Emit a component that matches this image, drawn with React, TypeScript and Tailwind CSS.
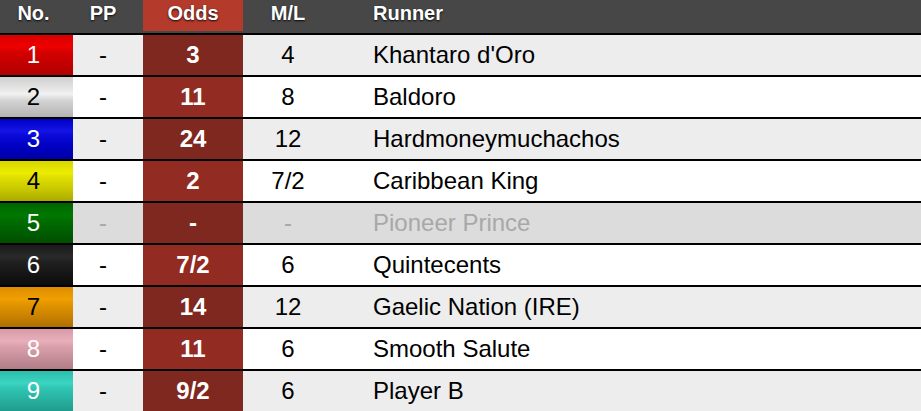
import React from 'react';

type Runner = {
  no: number;
  odds: string;
  ml: string;
  name: string;
  cloth: string;
  numText: string;
  scratched?: boolean;
};

const runners: Runner[] = [
  {
    no: 1, odds: '3', ml: '4', name: "Khantaro d'Oro",
    cloth: 'bg-[linear-gradient(to_bottom,#d80000_0%,#ee0000_30%,#d60000_42%,#c40000_70%,#b00000_100%)]',
    numText: 'text-white',
  },
  {
    no: 2, odds: '11', ml: '8', name: 'Baldoro',
    cloth: 'bg-[linear-gradient(to_bottom,#cfcfcf_0%,#e6e6e6_30%,#f2f2f2_42%,#d2d2d2_60%,#b4b4b4_100%)]',
    numText: 'text-black',
  },
  {
    no: 3, odds: '24', ml: '12', name: 'Hardmoneymuchachos',
    cloth: 'bg-[linear-gradient(to_bottom,#0000c8_0%,#1414e6_30%,#0a0ad8_42%,#0000c0_70%,#0000a8_100%)]',
    numText: 'text-white',
  },
  {
    no: 4, odds: '2', ml: '7/2', name: 'Caribbean King',
    cloth: 'bg-[linear-gradient(to_bottom,#d6d600_0%,#ecec00_30%,#dede00_42%,#c8c800_70%,#aaaa00_100%)]',
    numText: 'text-black',
  },
  {
    no: 5, odds: '-', ml: '-', name: 'Pioneer Prince', scratched: true,
    cloth: 'bg-[linear-gradient(to_bottom,#006400_0%,#007800_30%,#006e00_42%,#006000_70%,#004e00_100%)]',
    numText: 'text-white',
  },
  {
    no: 6, odds: '7/2', ml: '6', name: 'Quintecents',
    cloth: 'bg-[linear-gradient(to_bottom,#1a1a1a_0%,#2a2a2a_30%,#202020_42%,#161616_70%,#0c0c0c_100%)]',
    numText: 'text-white',
  },
  {
    no: 7, odds: '14', ml: '12', name: 'Gaelic Nation (IRE)',
    cloth: 'bg-[linear-gradient(to_bottom,#dc8c00_0%,#f0a000_30%,#e49600_42%,#cc8400_70%,#b07000_100%)]',
    numText: 'text-black',
  },
  {
    no: 8, odds: '11', ml: '6', name: 'Smooth Salute',
    cloth: 'bg-[linear-gradient(to_bottom,#d89aa6_0%,#e8b0bb_30%,#dba2ad_42%,#c8909b_70%,#b07d88_100%)]',
    numText: 'text-white',
  },
  {
    no: 9, odds: '9/2', ml: '6', name: 'Player B',
    cloth: 'bg-[linear-gradient(to_bottom,#2cbcaa_0%,#3cd4c2_30%,#30c6b4_42%,#28b2a0_70%,#1f9c8c_100%)]',
    numText: 'text-white',
  },
];

const headShadow = '[text-shadow:0_1px_2px_rgba(0,0,0,0.9)]';

export default function App() {
  return (
    <div className="w-[921px] h-[411px] overflow-hidden bg-white font-['Liberation_Sans',Arial,sans-serif]">
      {/* header */}
      <div className="flex h-[35px] bg-[#474747] border-b-2 border-black text-white font-bold text-[20px] leading-none">
        <div className={`w-[73px] pr-[6px] pb-[8px] flex items-center justify-center ${headShadow}`}>No.</div>
        <div className={`w-[70px] pr-[10px] pb-[8px] flex items-center justify-center ${headShadow}`}>PP</div>
        <div className="w-[100px] h-[31px] pb-[6px] bg-[#b43a2c] flex items-center justify-center">
          <span className={headShadow}>Odds</span>
        </div>
        <div className={`w-[90px] pb-[8px] flex items-center justify-center ${headShadow}`}>M/L</div>
        <div className={`flex-1 pl-[40px] pb-[8px] flex items-center ${headShadow}`}>Runner</div>
      </div>

      {runners.map((r, i) => {
        const odd = i % 2 === 0;
        const rowBg = r.scratched ? 'bg-[#dcdcdc]' : odd ? 'bg-[#ededed]' : 'bg-white';
        const txt = r.scratched ? 'text-[#a8a8a8]' : 'text-black';
        return (
          <div key={r.no} className={`flex h-[42px] border-b-2 border-black text-[24px] ${rowBg}`}>
            <div className={`w-[73px] pr-[6px] flex items-center justify-center ${r.cloth} ${r.numText}`}>
              {r.no}
            </div>
            <div className={`w-[70px] pr-[10px] flex items-center justify-center ${txt}`}>-</div>
            <div
              className={`w-[100px] flex items-center justify-center font-bold text-white ${
                odd ? 'bg-[#7f2820]' : 'bg-[#922b21]'
              }`}
            >
              {r.odds}
            </div>
            <div className={`w-[90px] flex items-center justify-center ${txt}`}>{r.ml}</div>
            <div className={`flex-1 pl-[40px] flex items-center ${txt}`}>{r.name}</div>
          </div>
        );
      })}
    </div>
  );
}
